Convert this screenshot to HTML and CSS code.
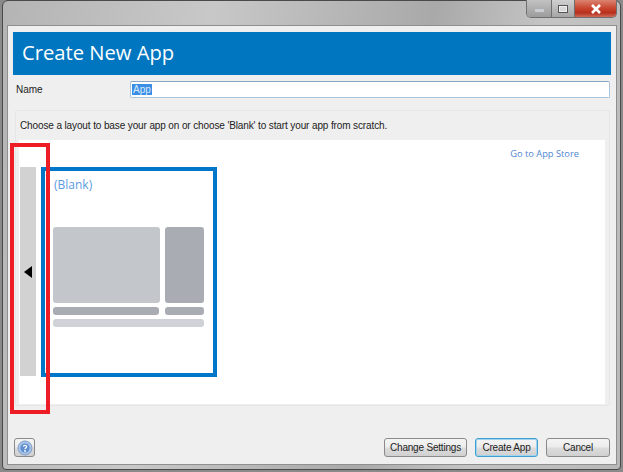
FILE: index.html
```html
<!DOCTYPE html>
<html lang="en">
<head>
<meta charset="utf-8">
<title>Create New App</title>
<link rel="stylesheet" href="styles.css">
</head>
<body>
<div class="window">
  <div class="caption-buttons">
    <div class="cap cap-min"><span class="min-glyph"></span></div>
    <div class="cap cap-max"><span class="max-glyph"></span></div>
    <div class="cap cap-close">
      <svg width="12" height="10" viewBox="0 0 12 10"><path d="M2 1 L10 9 M10 1 L2 9" stroke="#fff" stroke-width="2.6" fill="none"/></svg>
    </div>
  </div>
  <div class="client">
    <header class="banner">Create New App</header>
    <div class="name-row">
      <label class="name-label">Name</label>
      <div class="name-input"><span class="selected">App</span></div>
    </div>
    <section class="panel">
      <p class="hint">Choose a layout to base your app on or choose 'Blank' to start your app from scratch.</p>
      <div class="gallery">
        <a class="store-link">Go to App Store</a>
        <div class="gallery-row">
          <div class="pager"><span class="arrow"></span></div>
          <div class="card">
            <div class="card-title">(Blank)</div>
            <div class="thumb">
              <div class="thumb-row main-row">
                <div class="block light wide"></div>
                <div class="block dark narrow"></div>
              </div>
              <div class="thumb-row bar-row">
                <div class="block dark wide-bar"></div>
                <div class="block dark narrow"></div>
              </div>
              <div class="block light full-bar"></div>
            </div>
          </div>
        </div>
      </div>
    </section>
    <footer class="actions">
      <button class="help" aria-label="Help">
        <svg width="16" height="16" viewBox="0 0 16 16">
          <circle cx="8" cy="8" r="7" fill="#a9c4e6" stroke="#7f9fcb"/>
          <circle cx="8" cy="8" r="4.6" fill="#5f8fd0"/>
          <path d="M6.4 6.6 C6.6 5 9.6 5 9.6 6.8 C9.6 8 8 8 8 9.2" stroke="#fff" stroke-width="1.3" fill="none"/>
          <circle cx="8" cy="11" r="0.9" fill="#fff"/>
        </svg>
      </button>
      <div class="spacer"></div>
      <button class="btn btn-settings">Change Settings</button>
      <button class="btn btn-create">Create App</button>
      <button class="btn btn-cancel">Cancel</button>
    </footer>
  </div>
</div>
<div class="highlight"></div>
</body>
</html>
```

FILE: styles.css
```css
* { box-sizing: border-box; }
html, body { margin: 0; padding: 0; }
body {
  position: relative;
  width: 623px;
  height: 472px;
  overflow: hidden;
  background: #8a8a8a;
  font-family: "Liberation Sans", Arial, sans-serif;
  font-size: 10px;
  color: #222;
}
.window {
  position: absolute;
  left: 2px;
  top: 0;
  width: 619px;
  height: 470px;
  padding: 24px 3px 4px 4px;
  border: 1px solid #4a4a4a;
  border-radius: 6px 6px 4px 4px;
  background: linear-gradient(100deg, #b4b4b4 0%, #c8c8c8 30%, #a9a9a9 62%, #c4c4c4 78%, #b8b8b8 100%);
}
.caption-buttons {
  position: absolute;
  top: -1px;
  right: 3px;
  display: flex;
  height: 18px;
  border: 1px solid #6f6f6f;
  border-top: 0;
  border-radius: 0 0 5px 5px;
  overflow: hidden;
}
.cap {
  display: flex;
  align-items: center;
  justify-content: center;
  height: 100%;
}
.cap-min {
  width: 25px;
  background: linear-gradient(#c2c2c2, #9c9c9c);
  border-right: 1px solid #6f6f6f;
}
.cap-max {
  width: 23px;
  background: linear-gradient(#d0d0d0, #a5a5a5);
  border-right: 1px solid #6f6f6f;
}
.cap-close {
  width: 41px;
  background: linear-gradient(#d9836f 0%, #c9432d 50%, #b6301e 75%, #cf6a58 100%);
}
.min-glyph { width: 9px; height: 3px; margin-top: 3px; background: #c9cdd1; }
.max-glyph { width: 10px; height: 8px; border: 1px solid #555; background: #d8d8d8; box-shadow: inset 0 0 0 1px #eee; }
.client {
  display: flex;
  flex-direction: column;
  height: 100%;
  padding: 6px 5px 6px 5px;
  background: #efefef;
  border: 1px solid #8f8f8f;
}
.banner {
  height: 43px;
  flex: none;
  padding-left: 9px;
  background: #0076c0;
  color: #fff;
  font-family: "Open Sans", sans-serif;
  font-size: 20.2px;
  line-height: 41px;
}
.name-row {
  display: flex;
  align-items: center;
  height: 16px;
  margin-top: 6px;
  flex: none;
}
.name-label { width: 117px; padding-left: 3px; font-size: 10px; }
.name-input {
  flex: 1;
  height: 17px;
  margin-right: 1px;
  padding: 2px 0 0 1px;
  background: #fff;
  border: 1px solid #a8c3dc;
  border-top-color: #8aa6c4;
  border-radius: 2px;
  font-size: 10px;
  line-height: 11px;
}
.selected { background: #3a8ee6; color: #d8e9fb; padding: 0 1px; }
.panel {
  flex: none;
  height: 296px;
  margin: 13px 1px 0 2px;
  padding: 0 4px 1px 3px;
  border: 1px solid #e6e6e6;
  border-radius: 2px;
  display: flex;
  flex-direction: column;
}
.hint { margin: 0 0 0 1px; height: 29px; line-height: 30px; font-size: 10px; letter-spacing: -0.12px; flex: none; }
.gallery {
  flex: 1;
  background: #fff;
  display: flex;
  flex-direction: column;
  padding: 7px 26px 0 1px;
}
.store-link {
  align-self: flex-end;
  color: #4f86cf;
  font-family: "Open Sans", sans-serif;
  font-size: 9.3px;
  line-height: 13px;
}
.gallery-row {
  display: flex;
  gap: 5px;
  margin-top: 7px;
}
.pager {
  width: 16px;
  height: 209px;
  background: #d2d2d2;
  display: flex;
  align-items: center;
  justify-content: center;
}
.arrow {
  width: 0;
  height: 0;
  border-style: solid;
  border-width: 6px 8px 6px 0;
  border-color: transparent #000 transparent transparent;
}
.card {
  width: 176px;
  height: 210px;
  border: 4px solid #0076c8;
  padding: 6px 8px 0 8px;
}
.card-title {
  margin-left: 1px;
  color: #5b9be0;
  font-family: "Open Sans", sans-serif;
  font-size: 12px;
  line-height: 15px;
}
.thumb { margin-top: 35px; display: flex; flex-direction: column; gap: 4px; }
.thumb-row { display: flex; gap: 5px; }
.block { border-radius: 3px; }
.light { background: #c3c7cb; }
.dark { background: #a9adb3; }
.wide { width: 107px; height: 76px; }
.narrow { width: 39px; }
.main-row .narrow { height: 76px; }
.bar-row { height: 8px; gap: 6px; }
.wide-bar { width: 106px; }
.full-bar { width: 151px; height: 8px; background: #cfd2d6; }
.actions {
  flex: 1;
  display: flex;
  align-items: flex-end;
  gap: 8px;
  padding-bottom: 1px;
}
.spacer { flex: 1; }
.help, .btn {
  height: 19px;
  border: 1px solid #8a8a8a;
  border-radius: 3px;
  background: linear-gradient(#f4f4f4 0%, #ececec 48%, #dcdcdc 52%, #d0d0d0 100%);
  font-family: "Liberation Sans", Arial, sans-serif;
  font-size: 10px;
  letter-spacing: -0.2px;
  color: #222;
  padding: 0;
}
.help {
  width: 21px;
  display: flex;
  align-items: center;
  justify-content: center;
  margin-left: 1px;
}
.btn-settings { width: 83px; }
.btn-create { width: 63px; border-color: #3f9fd0; box-shadow: inset 0 0 0 1px #9fd4ee; }
.btn-cancel { width: 64px; margin-right: 1px; }
.highlight {
  position: absolute;
  left: 10px;
  top: 143px;
  width: 40px;
  height: 271px;
  border: 4px solid #ee1c25;
}
```
